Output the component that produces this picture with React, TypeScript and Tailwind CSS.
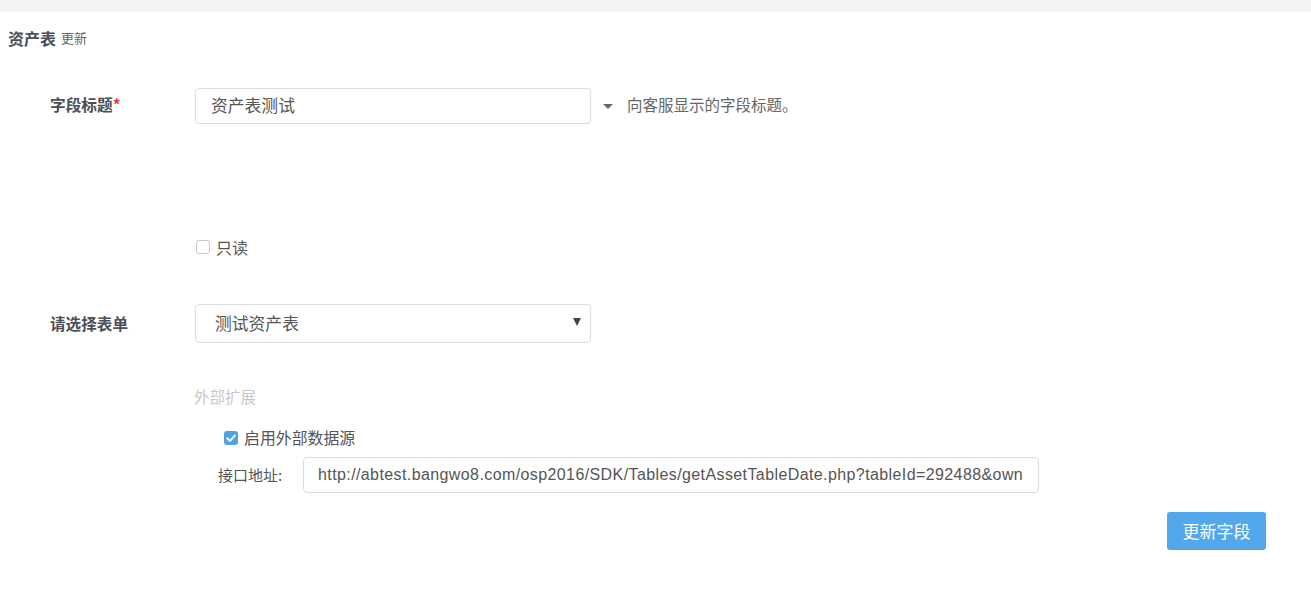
import React from "react";

const cjk = "font-['Microsoft_YaHei','Noto_Sans_CJK_SC',sans-serif]";

function CheckIcon() {
  return (
    <svg viewBox="0 0 14 14" className="h-[14px] w-[14px]">
      <rect x="0" y="0" width="14" height="14" rx="3" fill="#4ea3e6" />
      <path d="M3.2 7.2 L6 9.8 L10.9 4.4" stroke="#fff" strokeWidth="2" fill="none" strokeLinecap="round" strokeLinejoin="round" />
    </svg>
  );
}

export default function App() {
  return (
    <div className={`min-h-[599px] w-[1311px] bg-white text-[#555] ${cjk}`}>
      <div className="h-[12px] bg-[#f3f3f3]" />

      <div className="flex h-[52px] items-center gap-[5px] pl-[8px]">
        <span className="text-[16px] font-bold text-[#4b4f58]">资产表</span>
        <span className="text-[13px] text-[#666]">更新</span>
      </div>

      {/* 字段标题 */}
      <div className="mt-[24px] flex items-center">
        <label className="mb-[3px] w-[195px] pl-[50px] text-[15.7px] font-bold text-[#4b4f58]">
          字段标题<span className="text-[#e23b3b]">*</span>
        </label>
        <div className="flex h-[36px] w-[396px] items-center rounded-[4px] border border-[#dcdcdc] px-[15px] text-[16.8px] text-[#555]">
          资产表测试
        </div>
        <svg viewBox="0 0 10 5" className="ml-[12px] h-[5px] w-[10px]">
          <polygon points="0,0 10,0 5,5" fill="#666" />
        </svg>
        <span className="mb-[3px] ml-[14px] text-[15.5px] text-[#666]">向客服显示的字段标题。</span>
      </div>

      {/* 只读 */}
      <div className="mt-[113px] flex h-[20px] items-center pl-[196px]">
        <span className="h-[14px] w-[14px] rounded-[3px] border border-[#c8c8c8] bg-white" />
        <span className="ml-[6px] text-[16px] text-[#555]">只读</span>
      </div>

      {/* 请选择表单 */}
      <div className="mt-[47px] flex items-center">
        <label className="w-[195px] pl-[50px] text-[15.6px] font-bold text-[#4b4f58]">请选择表单</label>
        <div className="flex h-[39px] w-[396px] items-center justify-between rounded-[4px] border border-[#dcdcdc] pl-[19px] pr-[9px] text-[16.8px] text-[#555]">
          <span>测试资产表</span>
          <svg viewBox="0 0 8 8" className="mb-[4px] h-[8px] w-[8px]">
            <polygon points="0,0 8,0 4,8" fill="#444" />
          </svg>
        </div>
      </div>

      {/* 外部扩展 */}
      <div className="mt-[43px] h-[20px] pl-[194px] text-[15.5px] leading-[20px] text-[#c8c8c8]">外部扩展</div>

      <div className="mt-[22px] flex h-[20px] items-center pl-[224px]">
        <CheckIcon />
        <span className="ml-[6px] text-[15.9px] text-[#555]">启用外部数据源</span>
      </div>

      <div className="mt-[9px] flex items-center">
        <label className="w-[303px] pl-[218px] text-[15px] text-[#555]">接口地址:</label>
        <div className="flex h-[36px] w-[736px] items-center overflow-hidden whitespace-nowrap rounded-[4px] border border-[#dcdcdc] pl-[14px] font-['Liberation_Sans',Arial,sans-serif] text-[16px] tracking-[0.4px] text-[#555]">
          http://abtest.bangwo8.com/osp2016/SDK/Tables/getAssetTableDate.php?tableId=292488&amp;own
        </div>
      </div>

      <div className="mt-[19px] flex justify-end pr-[45px]">
        <button className="h-[38px] w-[99px] rounded-[3px] bg-[#52a8ea] text-[17px] text-white">更新字段</button>
      </div>
    </div>
  );
}
